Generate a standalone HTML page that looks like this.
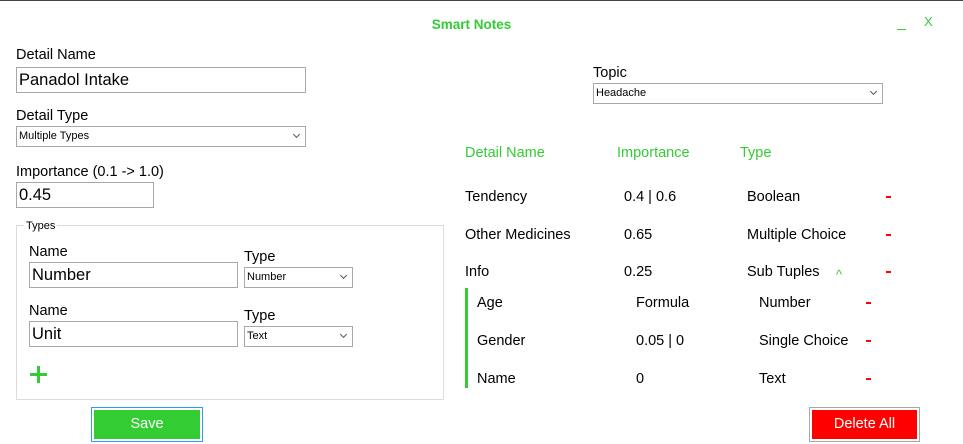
<!DOCTYPE html>
<html><head><meta charset="utf-8"><style>
*{margin:0;padding:0;box-sizing:border-box}
body{width:963px;height:444px;background:#fff;position:relative;overflow:hidden;font-family:"Liberation Sans",sans-serif;color:#000}
.a{position:absolute;white-space:nowrap}
.t{position:absolute;white-space:nowrap;line-height:20px;font-size:14.5px}
.g{color:#33cc33}
.inp{position:absolute;border:1px solid #a8a8a8;background:#fff;font-size:16.5px;line-height:25px;padding-left:2px}
.sel{position:absolute;border:1px solid #a8a8a8;background:#fff;font-size:11px;line-height:18px;padding-left:2px}
.sel:after{content:"";position:absolute;right:6px;top:5px;width:4px;height:4px;border-right:1.5px solid #555;border-bottom:1.5px solid #555;transform:rotate(45deg)}
.m{position:absolute;width:5px;height:2px;background:#f00}
</style></head><body>
<div class="a" style="left:0;top:0;width:963px;height:1px;background:#444"></div>
<div class="t g" style="left:0;width:943px;text-align:center;top:15px;font-weight:bold;font-size:13.5px">Smart Notes</div>
<div class="a" style="left:897px;top:29px;width:9px;height:1px;background:#33cc33"></div>
<div class="t g" style="left:924px;top:12px;font-size:13px">X</div>

<div class="t" style="left:16px;top:45px">Detail Name</div>
<div class="inp" style="left:16px;top:67px;width:290px;height:26px">Panadol Intake</div>
<div class="t" style="left:16px;top:106px">Detail Type</div>
<div class="sel" style="left:16px;top:126px;width:290px;height:21px">Multiple Types</div>
<div class="t" style="left:16px;top:162px">Importance (0.1 -&gt; 1.0)</div>
<div class="inp" style="left:16px;top:182px;width:138px;height:26px">0.45</div>

<div class="a" style="left:16px;top:225px;width:428px;height:175px;border:1px solid #dcdcdc"></div>
<div class="a" style="left:24px;top:219px;font-size:11px;background:#fff;padding:0 2px;line-height:14px">Types</div>
<div class="t" style="left:29px;top:242px">Name</div>
<div class="inp" style="left:29px;top:262px;width:209px;height:26px">Number</div>
<div class="t" style="left:244px;top:247px">Type</div>
<div class="sel" style="left:244px;top:267px;width:109px;height:21px">Number</div>
<div class="t" style="left:29px;top:301px">Name</div>
<div class="inp" style="left:29px;top:321px;width:209px;height:26px">Unit</div>
<div class="t" style="left:244px;top:306px">Type</div>
<div class="sel" style="left:244px;top:326px;width:109px;height:21px">Text</div>
<div class="a" style="left:30px;top:373px;width:17px;height:3px;background:#33cc33"></div>
<div class="a" style="left:37px;top:366px;width:3px;height:17px;background:#33cc33"></div>

<div class="a" style="left:91px;top:407px;width:112px;height:35px;border:1px solid #3399ff;padding:2px"><div style="background:#33cc33;width:100%;height:100%;color:#fff;font-size:14.5px;text-align:center;line-height:29px">Save</div></div>

<div class="t" style="left:593px;top:63px">Topic</div>
<div class="sel" style="left:593px;top:83px;width:290px;height:21px">Headache</div>

<div class="t g" style="left:465px;top:143px">Detail Name</div>
<div class="t g" style="left:617px;top:143px">Importance</div>
<div class="t g" style="left:740px;top:143px">Type</div>

<div class="t" style="left:465px;top:187px">Tendency</div>
<div class="t" style="left:624px;top:187px">0.4 | 0.6</div>
<div class="t" style="left:747px;top:187px">Boolean</div>
<div class="m" style="left:886px;top:196px"></div>
<div class="t" style="left:465px;top:225px">Other Medicines</div>
<div class="t" style="left:624px;top:225px">0.65</div>
<div class="t" style="left:747px;top:225px">Multiple Choice</div>
<div class="m" style="left:886px;top:234px"></div>
<div class="t" style="left:465px;top:262px">Info</div>
<div class="t" style="left:624px;top:262px">0.25</div>
<div class="t" style="left:747px;top:262px">Sub Tuples</div>
<div class="t g" style="left:836px;top:265px;font-size:13px">^</div>
<div class="m" style="left:886px;top:271px"></div>

<div class="a" style="left:465px;top:288px;width:3px;height:100px;background:#33cc33"></div>
<div class="t" style="left:477px;top:293px">Age</div>
<div class="t" style="left:636px;top:293px">Formula</div>
<div class="t" style="left:759px;top:293px">Number</div>
<div class="m" style="left:866px;top:302px"></div>
<div class="t" style="left:477px;top:331px">Gender</div>
<div class="t" style="left:636px;top:331px">0.05 | 0</div>
<div class="t" style="left:759px;top:331px">Single Choice</div>
<div class="m" style="left:866px;top:340px"></div>
<div class="t" style="left:477px;top:369px">Name</div>
<div class="t" style="left:636px;top:369px">0</div>
<div class="t" style="left:759px;top:369px">Text</div>
<div class="m" style="left:866px;top:378px"></div>

<div class="a" style="left:809px;top:407px;width:111px;height:35px;border:1px solid #a8a8a8;padding:2px"><div style="background:#ff0000;width:100%;height:100%;color:#fff;font-size:14.5px;text-align:center;line-height:29px">Delete All</div></div>
</body></html>
